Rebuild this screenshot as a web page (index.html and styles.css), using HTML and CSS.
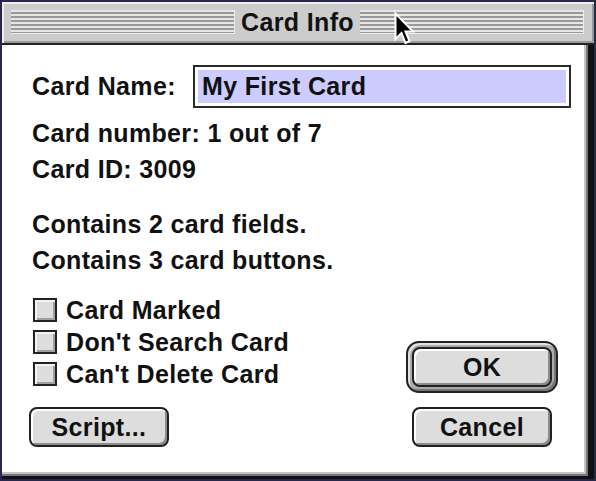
FILE: index.html
```html
<!DOCTYPE html>
<html>
<head>
<meta charset="utf-8">
<title>Card Info</title>
<link rel="stylesheet" href="styles.css">
</head>
<body>
<div class="window">
  <div class="titlebar">
    <div class="stripes"></div>
    <div class="title">Card Info</div>
    <div class="stripes"></div>
  </div>
  <div class="dialog">
    <div class="name-row">
      <span class="label">Card Name:</span>
      <div class="field"><span class="selected">My First Card</span></div>
    </div>
    <div class="info">
      <div class="line">Card number: 1 out of 7</div>
      <div class="line">Card ID: 3009</div>
    </div>
    <div class="info contains">
      <div class="line">Contains 2 card fields.</div>
      <div class="line">Contains 3 card buttons.</div>
    </div>
    <div class="bottom">
      <div class="left-col">
        <div class="check"><span class="box"></span>Card Marked</div>
        <div class="check"><span class="box"></span>Don't Search Card</div>
        <div class="check"><span class="box"></span>Can't Delete Card</div>
        <div class="button script">Script...</div>
      </div>
      <div class="right-col">
        <div class="default-ring"><div class="button">OK</div></div>
        <div class="button cancel">Cancel</div>
      </div>
    </div>
  </div>
  <svg class="cursor" width="24" height="36" viewBox="0 0 24 36">
    <polygon points="1.5,1.5 1.5,27 7.5,21 11.5,31 15.5,29 11.5,19.5 19,19.5" fill="#000" stroke="#fff" stroke-width="2" stroke-linejoin="miter"/>
  </svg>
</div>
</body>
</html>
```

FILE: styles.css
```css
html, body {
  margin: 0;
  padding: 0;
  background: #fff;
}

.window {
  position: relative;
  width: 596px;
  height: 481px;
  box-sizing: border-box;
  border: 2px solid #28284e;
  display: flex;
  flex-direction: column;
  background: #fff;
  font-family: "Liberation Sans", Arial, sans-serif;
  font-weight: bold;
  font-size: 25px;
  letter-spacing: 0.35px;
  color: #111;
}

.titlebar {
  height: 41px;
  flex: none;
  background: #cccccc;
  border-bottom: 2px solid #222;
  box-shadow: inset 2px 2px 0 #eeeeee, inset -2px -2px 0 #9a9a9a;
  display: flex;
  align-items: center;
  padding: 0 10px 0 9px;
}

.stripes {
  flex: 1;
  height: 24px;
  margin-top: -1px;
  background: repeating-linear-gradient(to bottom, #e6e6e6 0 2px, #999999 2px 4px);
  box-shadow: inset -1px -1px 0 #eee;
}

.title {
  padding: 0 6px;
  line-height: 41px;
  color: #111;
}

.dialog {
  flex: 1;
  background: #fff;
  border-right: 6px solid #111;
  border-bottom: 3px solid #111;
  box-shadow: inset -2px -2px 0 #777, inset -4px -4px 0 #c4c4c4;
  padding: 20px 17px 0 30px;
  display: flex;
  flex-direction: column;
}

.name-row {
  display: flex;
  align-items: center;
  height: 43px;
}

.label {
  width: 161px;
  flex: none;
}

.field {
  flex: 1;
  height: 43px;
  box-sizing: border-box;
  border: 2px solid #2a2a2a;
  padding: 3px;
  display: flex;
}

.selected {
  flex: 1;
  background: #ccccff;
  padding-left: 4px;
  line-height: 33px;
}

.info {
  margin-top: 7px;
}

.info.contains {
  margin-top: 19px;
}

.line {
  line-height: 36px;
  white-space: nowrap;
}

.bottom {
  margin-top: 16px;
  display: flex;
  justify-content: space-between;
  align-items: flex-end;
  padding-right: 13px;
}

.left-col {
  display: flex;
  flex-direction: column;
  align-items: flex-start;
}

.check {
  display: flex;
  align-items: center;
  height: 32px;
  white-space: nowrap;
}

.box {
  width: 24px;
  height: 24px;
  box-sizing: border-box;
  border: 2px solid #222;
  background: #dddddd;
  box-shadow: inset 2px 2px 0 #f4f4f4, inset -2px -2px 0 #a0a0a0;
  margin: 0 9px 0 1px;
}

.button {
  width: 140px;
  height: 40px;
  box-sizing: border-box;
  border: 2px solid #222;
  border-radius: 8px;
  background: #dddddd;
  box-shadow: inset 2px 2px 0 #ffffff, inset -2px -2px 0 #8c8c8c;
  display: flex;
  align-items: center;
  justify-content: center;
  line-height: 1;
}

.script {
  margin-top: 17px;
  margin-left: -3px;
}

.right-col {
  display: flex;
  flex-direction: column;
  align-items: center;
}

.default-ring {
  border: 2px solid #222;
  border-radius: 13px;
  padding: 4px;
  background: #aaaaaa;
  box-shadow: inset 2px 2px 0 #e2e2e2, inset -2px -2px 0 #777;
}

.cancel {
  margin-top: 14px;
}

.cursor {
  position: absolute;
  left: 392px;
  top: 10px;
}
```
